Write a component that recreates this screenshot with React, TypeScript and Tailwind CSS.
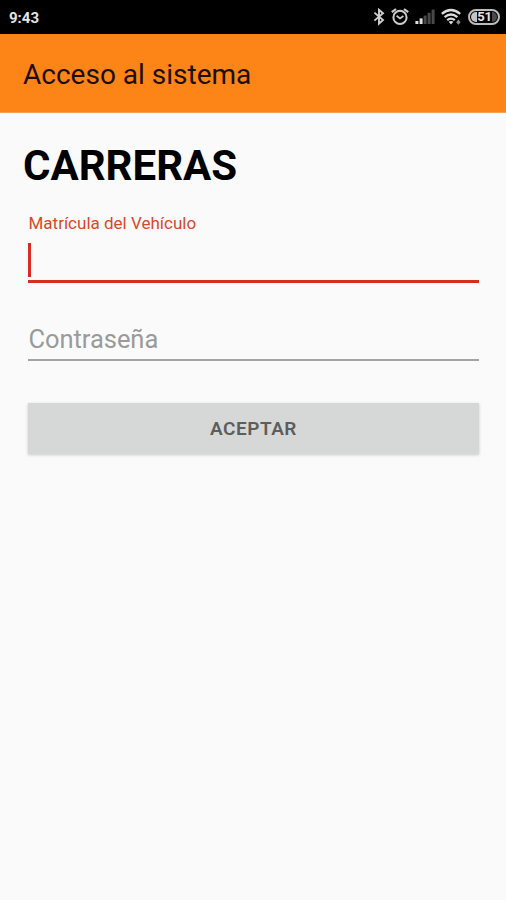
import { useState } from "react"

function BluetoothIcon() {
  return (
    <svg className="w-[12px] h-[18px]" viewBox="0 0 12 18" fill="none" stroke="#cfcfcf" strokeWidth="1.9">
      <path d="M1.4 4.6 10 12 6 15.6V1.8L10 5.2 1.4 12.6" />
    </svg>
  )
}

function AlarmIcon() {
  return (
    <svg className="w-[18px] h-[18px]" viewBox="0 0 18 18" fill="none" stroke="#cccccc" strokeWidth="2">
      <circle cx="9" cy="9.4" r="6.6" />
      <path d="M0.8 4.2 5 1M17.2 4.2 13 1" strokeWidth="2.2" />
      <path d="M5.6 7.8 9 10.4 12.4 8" strokeWidth="1.7" />
    </svg>
  )
}

function SignalIcon() {
  return (
    <svg className="w-[20px] h-[16px]" viewBox="0 0 20 16">
      <rect x="0.4" y="12" width="3" height="3" fill="#e0e0e0" />
      <rect x="4.6" y="9.4" width="3" height="5.6" fill="#e0e0e0" />
      <rect x="8.6" y="6.6" width="3" height="8.4" fill="#484848" />
      <rect x="12.6" y="3.8" width="3" height="11.2" fill="#484848" />
      <rect x="16.6" y="0.6" width="3" height="14.4" fill="#484848" />
    </svg>
  )
}

function WifiIcon() {
  return (
    <svg className="w-[21px] h-[18px]" viewBox="0 0 21 18" fill="none" stroke="#dcdcdc" strokeWidth="2.2">
      <path d="M0.8 5.8Q10 -1.8 19.2 5.8" />
      <path d="M3.6 9.2Q10 3.8 16.4 9.2" />
      <path d="M6.2 12.2Q10 9 13.8 12.2" />
      <path d="M7.6 13.7Q10 12.2 12.4 13.7L10 16.6z" fill="#dcdcdc" stroke="none" />
      <path d="M15.2 14.2 17.4 11.6 19.6 14.2 17.4 16.8z" fill="#8f8f8f" stroke="none" />
    </svg>
  )
}

function Battery({ level }: { level: number }) {
  return (
    <div className="flex h-[16px] w-[32px] items-center justify-between rounded-full border-2 border-[#bcbcbc] p-px">
      <div className="h-full w-[6px] rounded-l-full bg-[#c4c4c4]" />
      <span className="text-[13px] leading-[14px] font-bold text-[#e6e6e6] tracking-[-0.3px]">{level}</span>
      <div className="h-full w-[5px] rounded-r-full bg-[#4a4a4a]" />
    </div>
  )
}

function StatusBar() {
  return (
    <div className="flex h-[34px] items-center justify-between bg-black pl-[9px] pr-[6px]">
      <span className="text-[15px] leading-[18px] font-bold text-[#e4e4e4] pt-px">9:43</span>
      <div className="flex items-center">
        <BluetoothIcon />
        <div className="ml-[6px]">
          <AlarmIcon />
        </div>
        <div className="ml-[6px]">
          <SignalIcon />
        </div>
        <div className="ml-[6px] mr-[6px]">
          <WifiIcon />
        </div>
        <Battery level={51} />
      </div>
    </div>
  )
}

export default function App() {
  const [plate, setPlate] = useState("")
  const [password, setPassword] = useState("")

  return (
    <div className="min-h-[900px] w-full bg-[#fafafa] font-['Roboto',sans-serif]">
      <StatusBar />

      <header className="flex h-[79px] items-center bg-[#fd8416] pl-[23px] border-b border-[#f3a25c]">
        <span className="text-[28px] leading-8 text-[#1c0e02] pt-[3px]">Acceso al sistema</span>
      </header>

      <main className="pl-[28px] pr-[27px] pt-[28px]">
        <h1 className="-ml-[5px] text-[42px] leading-[50px] font-bold text-black">CARRERAS</h1>

        <label className="mt-[22px] block h-[20px] pl-[0.5px] text-[17px] leading-[20px] text-[#d9482b]">
          Matrícula del Vehículo
        </label>

        {/* Focused field with its caret */}
        <div className="mt-[10px] flex h-[40px] border-b-[3px] border-[#d92b22]">
          <div className="h-[34px] w-[3px] shrink-0 bg-[#d92b22]" />
          <input
            className="w-full bg-transparent text-[25px] caret-transparent outline-none"
            value={plate}
            onChange={(e) => setPlate(e.target.value)}
          />
        </div>

        <input
          type="password"
          placeholder="Contraseña"
          className="mt-[36px] block h-[42px] w-full border-b-2 border-[#a3a3a3] bg-transparent pb-px pl-[0.5px] text-[25.5px] tracking-[-0.05px] text-black outline-none placeholder:text-[#9a9a9a]"
          value={password}
          onChange={(e) => setPassword(e.target.value)}
        />

        <button className="mt-[42px] h-[51px] w-full bg-[#d6d8d7] pt-[2px] text-[19px] font-semibold tracking-[0.5px] text-[#5c5d5d] shadow-[0_1px_3px_rgba(0,0,0,0.2)]">
          ACEPTAR
        </button>
      </main>
    </div>
  )
}
